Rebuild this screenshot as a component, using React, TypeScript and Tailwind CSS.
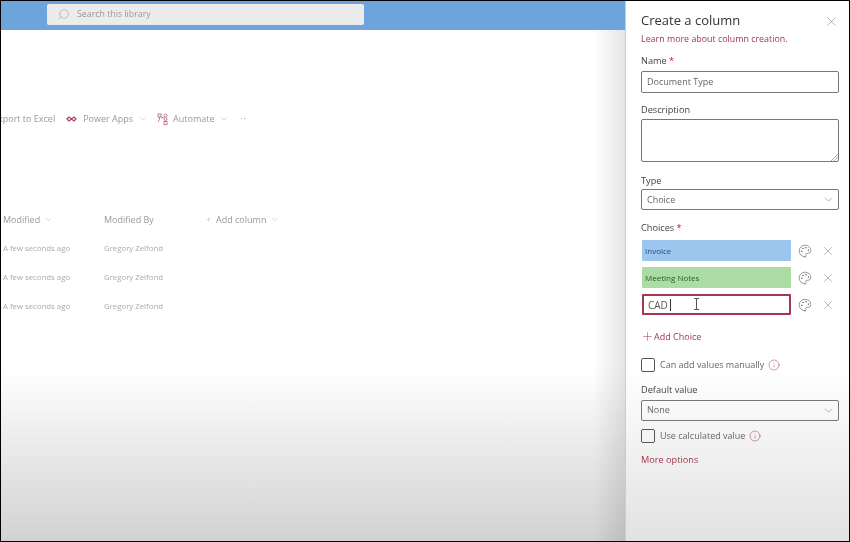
import { ChevronDown, Info, Palette, Plus, Search, X } from 'lucide-react';

const rows = [1, 2, 3];

function Label({ text, required }: { text: string; required?: boolean }) {
  return (
    <div className="text-[9.2px] leading-[16px] font-medium text-[#444]">
      {text}
      {required && <span className="text-[#a4262c]"> *</span>}
    </div>
  );
}

function SelectBox({ value }: { value: string }) {
  return (
    <div className="flex h-[21px] items-center justify-between rounded-[2px] border border-[#777] pl-[5px] pr-[3px] text-[9px] text-[#666]">
      <span>{value}</span>
      <ChevronDown size={13} strokeWidth={1} className="text-[#777]" />
    </div>
  );
}

function ChoiceRow({ children, className }: { children: React.ReactNode; className: string }) {
  return (
    <div className="flex items-center">
      <div className={`flex h-[21px] w-[149px] items-center rounded-[1px] text-[8px] ${className}`}>{children}</div>
      <Palette size={14} strokeWidth={1} className="ml-[7px] text-[#555]" />
      <X size={14} strokeWidth={1} className="ml-[9px] text-[#888]" />
    </div>
  );
}

function Check({ text, className }: { text: string; className: string }) {
  return (
    <div className={`flex items-center ${className}`}>
      <div className="h-[14px] w-[14px] rounded-[2px] border border-[#555]" />
      <span className="ml-[5px] text-[9px] text-[#666]">{text}</span>
      <Info size={12} strokeWidth={1} className="ml-[4px] text-[#a4374f]" />
    </div>
  );
}

export default function App() {
  return (
    <div className="relative flex h-[542px] w-[850px] overflow-hidden border border-black bg-white font-['Open_Sans','Noto_Sans',sans-serif]">
      <main className="flex h-full w-[624px] flex-col bg-gradient-to-b from-white from-[68%] to-[#d2d2d2] blur-[0.3px]">
        <header className="flex h-[29px] shrink-0 items-start bg-[#6ea4dc] pl-[46px] pt-[3px]">
          <div className="flex h-[21px] w-[317px] items-center gap-[7px] rounded-[2px] bg-[#ececec] pl-[10px] text-[8.8px] text-[#999]">
            <Search size={13} strokeWidth={1} className="-scale-x-100" />
            <span>Search this library</span>
          </div>
        </header>

        <div className="mt-[80px] flex h-[18px] items-center overflow-hidden text-[9px] text-[#999]">
          <span className="-ml-[8px]">Export to Excel</span>
          <svg width="11" height="8" viewBox="0 0 11 8" className="ml-[11px] text-[#b0405c]" fill="none" stroke="currentColor" strokeWidth="1.2">
            <path d="M1 4l2-2 2.500 2-2.500 2zM5.500 4l2.500-2 2 2-2 2z" />
          </svg>
          <span className="ml-[6px]">Power Apps</span>
          <ChevronDown size={10} strokeWidth={1} className="ml-[5px]" />
          <svg width="11" height="12" viewBox="0 0 11 12" className="ml-[9px] text-[#b0607c]" fill="none" stroke="currentColor" strokeWidth="0.8">
            <rect x="1" y="1" width="3" height="3" />
            <circle cx="8.500" cy="2.500" r="1.500" />
            <circle cx="8.500" cy="6" r="1.500" />
            <rect x="7" y="8.500" width="3" height="3" />
            <path d="M2.500 4v2M2.500 6L1 9M4 4l3 1" />
          </svg>
          <span className="ml-[5px]">Automate</span>
          <ChevronDown size={10} strokeWidth={1} className="ml-[5px]" />
          <span className="ml-[11px] tracking-[1px]">··</span>
        </div>

        <div className="mt-[81px] grid w-[300px] grid-cols-[103px_100px_1fr] items-center text-[9px] text-[#999]">
          <div className="flex h-[21px] items-center gap-[4px] pl-[2px] font-medium">
            Modified <ChevronDown size={9} strokeWidth={1} />
          </div>
          <div className="font-medium">Modified By</div>
          <div className="flex items-center pl-[1px] font-medium">
            <Plus size={7} strokeWidth={1} />
            <span className="ml-[4px]">Add column</span>
            <ChevronDown size={9} strokeWidth={1} className="ml-[4px]" />
          </div>
          {rows.map((r) => (
            <div key={r} className="col-span-3 mt-[9px] grid h-[20px] grid-cols-[103px_100px_1fr] items-center text-[7.800px] text-[#aaa]">
              <span className="pl-[2px]">A few seconds ago</span>
              <span>Gregory Zelfond</span>
            </div>
          ))}
        </div>
      </main>

      <aside className="relative flex h-full w-[224px] flex-col border-l-[1px] border-[#ccc] bg-gradient-to-b from-white from-[68%] to-[#e2e2e2] pl-[15px] pr-[10px] blur-[0.2px]">
        <div className="flex h-[33px] items-center justify-between pt-[7px]">
          <h1 className="text-[13px] font-medium text-[#333]">Create a column</h1>
          <X size={15} strokeWidth={1} className="text-[#888]" />
        </div>
        <a className="text-[8.900px] leading-[10px] text-[#a4374f]">Learn more about column creation.</a>

        <div className="mt-[9px]"><Label text="Name" required /></div>
        <div className="mt-[2px] flex h-[22px] items-center rounded-[2px] border border-[#777] pl-[5px] text-[9px] text-[#666]">Document Type</div>

        <div className="mt-[9px]"><Label text="Description" /></div>
        <div className="relative mt-[1px] h-[43px] rounded-[2px] border border-[#777]">
          <svg width="7" height="7" viewBox="0 0 7 7" className="absolute bottom-0 right-0 text-[#888]" stroke="currentColor" strokeWidth="0.7">
            <path d="M7 0L0 7M7 3L3 7" />
          </svg>
        </div>

        <div className="mt-[11px]"><Label text="Type" /></div>
        <SelectBox value="Choice" />

        <div className="mt-[10px]"><Label text="Choices" required /></div>
        <div className="mt-[4px] flex flex-col gap-[6px] pl-[1px]">
          <ChoiceRow className="bg-[#9cc6ee] pl-[3px] text-[#1f4a80]">Invoice</ChoiceRow>
          <ChoiceRow className="bg-[#abdca4] pl-[3px] text-[#24602a]">Meeting Notes</ChoiceRow>
          <ChoiceRow className="relative border-2 border-[#a4374f] pl-[4px] text-[10px] text-[#555]">
            <span className="mt-[2px]">CAD</span>
            <span className="ml-[2px] h-[12px] w-px bg-[#333]" />
            <svg width="7" height="12" viewBox="0 0 7 12" className="absolute left-[49px] top-[2px] text-[#444]" fill="none" stroke="currentColor" strokeWidth="0.9">
              <path d="M1 .5h5M3.500 .5v11M1 11.500h5" />
            </svg>
          </ChoiceRow>
        </div>

        <div className="mt-[15px] flex items-center text-[9px] text-[#a4374f]">
          <Plus size={13} strokeWidth={1} />
          <span className="ml-0">Add Choice</span>
        </div>

        <Check text="Can add values manually" className="mt-[14px]" />
        <div className="mt-[10px]"><Label text="Default value" /></div>
        <div className="mt-[2px]"><SelectBox value="None" /></div>
        <Check text="Use calculated value" className="mt-[8px]" />
        <a className="mt-[10px] text-[9.200px] text-[#a4374f]">More options</a>
      </aside>

      <div className="pointer-events-none absolute bottom-0 left-[592px] top-[29px] w-[32px] bg-gradient-to-r from-transparent to-black/10" />
    </div>
  );
}
